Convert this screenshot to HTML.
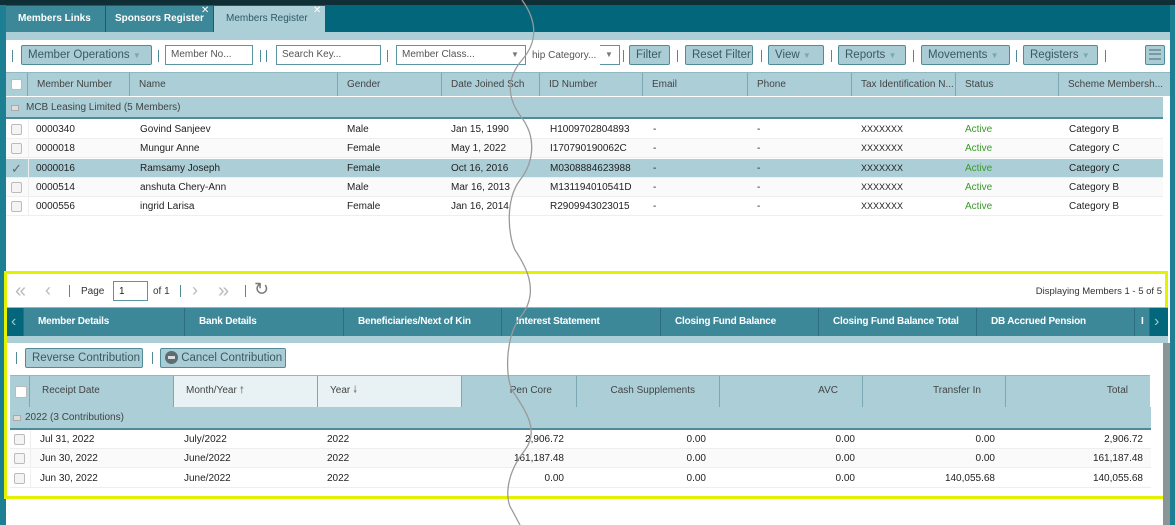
<!DOCTYPE html>
<html><head><meta charset="utf-8"><style>
*{box-sizing:border-box;margin:0;padding:0}
body{width:1175px;height:525px;overflow:hidden;background:#fff;font-family:"Liberation Sans",sans-serif;font-size:10px;color:#222;position:relative}
.a{position:absolute}
.t{position:absolute;white-space:nowrap}
.btn{position:absolute;height:20px;border:1px solid #4f8b99;border-radius:2px;background:#a9ccd5;color:#3a5a63;font-size:11.5px;line-height:18px;padding-left:6px}
.inp{position:absolute;height:20px;border:1px solid #5b95a3;background:#fff;color:#555;font-size:10px;line-height:18px;padding-left:5px}
.sep{position:absolute;width:1px;height:12px;background:#4f8b99}
.cb{position:absolute;width:11px;height:11px;border:1px solid #bbb;background:#f4f4f4;border-radius:2px}
.hc{position:absolute;height:100%;border-right:1px solid #7aa9b5;color:#444;line-height:24px;padding-left:9px}
.tab{position:absolute;top:0;height:28px;border-right:1px solid #2c6e7d;color:#fff;font-weight:bold;font-size:10px;line-height:28px;padding-left:14px;letter-spacing:-0.2px}
</style></head><body>
<div class="a" style="left:0;top:0;width:1175px;height:5px;background:#0f2e36"></div>
<div class="a" style="left:0;top:5px;width:1175px;height:27px;background:#04667a"></div>
<div class="a" style="left:0;top:5px;width:6px;height:520px;background:#1d7f92"></div>
<div class="a" style="left:1170px;top:5px;width:5px;height:520px;background:#1d7f92"></div>
<div class="a" style="left:6px;top:6px;width:99px;height:26px;background:#3c8898;color:#fff;font-weight:bold;font-size:10px;line-height:26px;padding-left:12px">Members Links</div>
<div class="a" style="left:106px;top:6px;width:107px;height:26px;background:#3c8898;color:#fff;font-weight:bold;font-size:10px;line-height:26px;padding-left:9px">Sponsors Register</div>
<div class="t" style="left:201px;top:5px;color:#fff;font-size:10px">✕</div>
<div class="a" style="left:214px;top:6px;width:111px;height:26px;background:#abced7;color:#2e5a64;font-size:10px;line-height:26px;padding-left:12px">Members Register</div>
<div class="t" style="left:313px;top:5px;color:#fff;font-size:10px">✕</div>
<div class="a" style="left:6px;top:32px;width:1164px;height:8px;background:#abced7"></div>
<div class="sep" style="left:12px;top:50px"></div>
<div class="btn" style="left:21px;top:45px;width:131px">Member Operations <span style="font-size:8px;color:#7aa">▼</span></div>
<div class="sep" style="left:158px;top:50px"></div>
<div class="inp" style="left:165px;top:45px;width:88px">Member No...</div>
<div class="sep" style="left:260px;top:50px"></div><div class="sep" style="left:266px;top:50px"></div>
<div class="inp" style="left:276px;top:45px;width:105px">Search Key...</div>
<div class="sep" style="left:387px;top:50px"></div>
<div class="inp" style="left:396px;top:45px;width:130px">Member Class... <span style="position:absolute;left:114px;font-size:8px;color:#777">▼</span></div>
<div class="t" style="left:532px;top:50px;color:#555">hip Category...</div>
<div class="inp" style="left:600px;top:45px;width:20px;border-left:none;border-right:1px solid #5b95a3;background:transparent"><span style="font-size:8px;color:#777">▼</span></div>
<div class="sep" style="left:623px;top:50px"></div>
<div class="btn" style="left:629px;top:45px;width:41px">Filter</div>
<div class="sep" style="left:677px;top:50px"></div>
<div class="btn" style="left:685px;top:45px;width:68px">Reset Filter</div>
<div class="sep" style="left:761px;top:50px"></div>
<div class="btn" style="left:768px;top:45px;width:56px">View <span style="font-size:8px;color:#7aa">▼</span></div>
<div class="sep" style="left:831px;top:50px"></div>
<div class="btn" style="left:838px;top:45px;width:68px">Reports <span style="font-size:8px;color:#7aa">▼</span></div>
<div class="sep" style="left:913px;top:50px"></div>
<div class="btn" style="left:921px;top:45px;width:89px">Movements <span style="font-size:8px;color:#7aa">▼</span></div>
<div class="sep" style="left:1016px;top:50px"></div>
<div class="btn" style="left:1023px;top:45px;width:75px">Registers <span style="font-size:8px;color:#7aa">▼</span></div>
<div class="sep" style="left:1105px;top:50px"></div>
<div class="btn" style="left:1145px;top:45px;width:20px;padding:3px 0 0 3px"><div style="width:12px;height:11px;border-top:2px solid #7a9aa2;border-bottom:2px solid #7a9aa2;position:relative"><div style="position:absolute;top:2px;width:12px;height:3px;border-top:2px solid #7a9aa2"></div></div></div>
<div class="a" style="left:6px;top:72px;width:1164px;height:24px;background:#abced7;border-top:1px solid #8fb8c2">
<div class="cb" style="left:5px;top:6px;background:#fff"></div>
<div class="hc" style="left:0;width:22px"></div>
<div class="hc" style="left:22px;width:102px">Member Number</div>
<div class="hc" style="left:124px;width:208px">Name</div>
<div class="hc" style="left:332px;width:104px">Gender</div>
<div class="hc" style="left:436px;width:98px">Date Joined Sch</div>
<div class="hc" style="left:534px;width:103px">ID Number</div>
<div class="hc" style="left:637px;width:105px">Email</div>
<div class="hc" style="left:742px;width:104px">Phone</div>
<div class="hc" style="left:846px;width:104px">Tax Identification N...</div>
<div class="hc" style="left:950px;width:103px">Status</div>
<div class="hc" style="left:1053px;width:110px;border:none">Scheme Membersh...</div>
</div>
<div class="a" style="left:6px;top:96px;width:1157px;height:23px;background:#abced7;border-top:1px solid #fff;border-bottom:2px solid #4f8b99;color:#444;line-height:21px;padding-left:20px">MCB Leasing Limited (5 Members)<div class="a" style="left:5px;top:8px;width:8px;height:6px;background:#ddd;border:1px solid #aaa"></div></div>
<div id="rows"></div>
<div class="a" style="left:4px;top:271px;width:1164px;height:228px;border:3px solid #e2f200"></div>
<div class="t" style="left:15px;top:280px;font-size:20px;color:#bbb;letter-spacing:-4px">«</div>
<div class="t" style="left:45px;top:280px;font-size:18px;color:#bbb">‹</div>
<div class="sep" style="left:69px;top:285px"></div>
<div class="t" style="left:81px;top:286px;color:#333">Page</div>
<div class="inp" style="left:113px;top:281px;width:35px;color:#222;line-height:19px">1</div>
<div class="t" style="left:153px;top:286px;color:#333">of 1</div>
<div class="sep" style="left:180px;top:285px"></div>
<div class="t" style="left:192px;top:280px;font-size:18px;color:#bbb">›</div>
<div class="t" style="left:218px;top:280px;font-size:20px;color:#bbb;letter-spacing:-4px">»</div>
<div class="sep" style="left:245px;top:285px"></div>
<div class="t" style="left:254px;top:279px;font-size:18px;color:#777">↻</div>
<div class="t" style="left:1020px;top:286px;width:142px;text-align:right;color:#333;font-size:9.5px">Displaying Members 1 - 5 of 5</div>
<div class="a" style="left:7px;top:307px;width:1161px;height:1px;background:#8fb8c2"></div>
<div class="a" style="left:7px;top:308px;width:1161px;height:28px;background:#3c8898">
<div class="tab" style="left:0;width:17px;background:#04667a;padding-left:4px;font-size:16px;font-weight:normal;color:#9cc">‹</div>
<div class="tab" style="left:17px;width:161px">Member Details</div>
<div class="tab" style="left:178px;width:159px">Bank Details</div>
<div class="tab" style="left:337px;width:158px">Beneficiaries/Next of Kin</div>
<div class="tab" style="left:495px;width:159px">Interest Statement</div>
<div class="tab" style="left:654px;width:158px">Closing Fund Balance</div>
<div class="tab" style="left:812px;width:158px">Closing Fund Balance Total</div>
<div class="tab" style="left:970px;width:158px">DB Accrued Pension</div>
<div class="tab" style="left:1128px;width:15px;padding-left:6px">I</div>
<div class="tab" style="left:1143px;width:18px;background:#04667a;padding-left:4px;font-size:16px;font-weight:normal;color:#9cc;border:none">›</div>
</div>
<div class="a" style="left:7px;top:336px;width:1161px;height:7px;background:#abced7"></div>
<div class="a" style="left:1163px;top:343px;width:7px;height:182px;background:#8a9598"></div>
<div class="sep" style="left:16px;top:352px"></div>
<div class="btn" style="left:25px;top:348px;width:118px;font-size:11.5px">Reverse Contribution</div>
<div class="sep" style="left:152px;top:352px"></div>
<div class="btn" style="left:160px;top:348px;width:126px;padding-left:4px"><span style="display:inline-block;width:13px;height:13px;border-radius:50%;background:#5a6e73;vertical-align:-3px;position:relative"><span style="position:absolute;left:3px;top:5px;width:7px;height:3px;background:#ddd"></span></span> Cancel Contribution</div>
<div class="a" style="left:10px;top:375px;width:1140px;height:32px;background:#abced7;border-top:1px solid #8fb8c2;line-height:30px">
<div class="cb" style="left:5px;top:10px;background:#fff;width:12px;height:12px"></div>
<div class="hc" style="left:0;width:20px;line-height:30px"></div>
<div class="hc" style="left:20px;width:144px;line-height:30px;padding-left:12px">Receipt Date</div>
<div class="hc" style="left:164px;width:144px;line-height:30px;padding-left:12px;background:#e8f1f3">Month/Year <span style="color:#888">🠕</span></div>
<div class="hc" style="left:308px;width:144px;line-height:30px;padding-left:12px;background:#e8f1f3">Year <span style="color:#888">🠗</span></div>
<div class="hc" style="left:452px;width:115px;line-height:30px;text-align:right;padding-right:24px">Pen   Core</div>
<div class="hc" style="left:567px;width:143px;line-height:30px;text-align:right;padding-right:24px">Cash Supplements</div>
<div class="hc" style="left:710px;width:143px;line-height:30px;text-align:right;padding-right:24px">AVC</div>
<div class="hc" style="left:853px;width:143px;line-height:30px;text-align:right;padding-right:24px">Transfer In</div>
<div class="hc" style="left:996px;width:144px;line-height:30px;text-align:right;padding-right:22px;border:none">Total</div>
</div>
<div class="a" style="left:10px;top:407px;width:1141px;height:23px;background:#abced7;border-bottom:2px solid #4f8b99;color:#444;line-height:21px;padding-left:15px">2022 (3 Contributions)<div class="a" style="left:3px;top:8px;width:8px;height:6px;background:#ddd;border:1px solid #aaa"></div></div>
<div id="rows2"></div>
<script>
var r=[["0000340","Govind Sanjeev","Male","Jan 15, 1990","H1009702804893","Category B"],["0000018","Mungur Anne","Female","May 1, 2022","I170790190062C","Category C"],["0000016","Ramsamy Joseph","Female","Oct 16, 2016","M0308884623988","Category C"],["0000514","anshuta Chery-Ann","Male","Mar 16, 2013","M131194010541D","Category B"],["0000556","ingrid Larisa","Female","Jan 16, 2014","R2909943023015","Category B"]];
var h="";
r.forEach(function(d,i){var y=120+i*19.3;var bg=i==2?"#abced7":(i%2?"#fafafa":"#fff");
h+='<div class="a" style="left:6px;top:'+y+'px;width:1157px;height:19px;background:'+bg+';border-bottom:1px solid #eee;line-height:19px">'+
'<div class="a" style="left:22px;top:0;width:1px;height:19px;background:#eee"></div>'+
(i==2?'<div class="t" style="left:5px;top:0;font-size:13px;color:#666">✓</div>':'<div class="cb" style="left:5px;top:4px"></div>')+
'<div class="t" style="left:30px">'+d[0]+'</div><div class="t" style="left:134px">'+d[1]+'</div><div class="t" style="left:341px">'+d[2]+'</div><div class="t" style="left:445px">'+d[3]+'</div><div class="t" style="left:544px">'+d[4]+'</div><div class="t" style="left:647px">-</div><div class="t" style="left:751px">-</div><div class="t" style="left:855px;font-size:9px">XXXXXXX</div><div class="t" style="left:959px;color:#3a9a2a">Active</div><div class="t" style="left:1063px">'+d[5]+'</div></div>';});
document.getElementById("rows").innerHTML=h;
var b=[["Jul 31, 2022","July/2022","2,906.72","0.00","0.00","0.00","2,906.72"],["Jun 30, 2022","June/2022","161,187.48","0.00","0.00","0.00","161,187.48"],["Jun 30, 2022","June/2022","0.00","0.00","0.00","140,055.68","140,055.68"]];
h="";
b.forEach(function(d,i){var y=430+i*19.3;
h+='<div class="a" style="left:10px;top:'+y+'px;width:1141px;height:19px;background:'+(i%2?'#fafafa':'#fff')+';border-bottom:1px solid #eee;line-height:19px">'+
'<div class="a" style="left:20px;top:0;width:1px;height:19px;background:#eee"></div><div class="cb" style="left:4px;top:4px"></div>'+
'<div class="t" style="left:30px">'+d[0]+'</div><div class="t" style="left:174px">'+d[1]+'</div><div class="t" style="left:317px">2022</div>'+
'<div class="t" style="right:587px">'+d[2]+'</div><div class="t" style="right:445px">'+d[3]+'</div><div class="t" style="right:296px">'+d[4]+'</div><div class="t" style="right:156px">'+d[5]+'</div><div class="t" style="right:8px">'+d[6]+'</div></div>';});
document.getElementById("rows2").innerHTML=h;
</script>
<svg class="a" style="left:0;top:0" width="1175" height="525"><path d="M522 0 C540 25 535 45 522 60 C505 80 508 100 522 118 C538 140 532 165 520 180 C505 200 508 235 515 250 C525 265 540 290 522 315 C505 335 505 375 512 390 C525 410 540 430 525 450 C505 475 505 500 512 510 L520 525" fill="none" stroke="#9a9a9a" stroke-width="1.3"/></svg>
</body></html>
